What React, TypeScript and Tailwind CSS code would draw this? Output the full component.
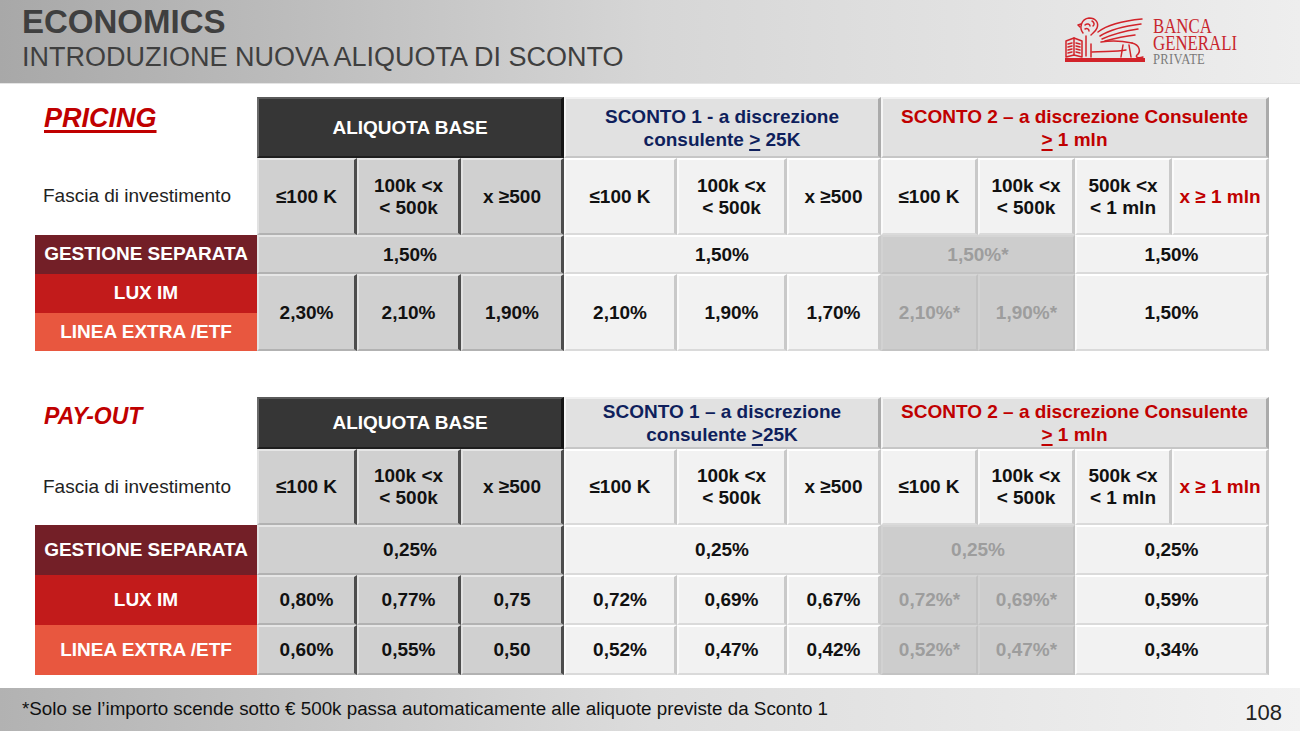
import React from 'react';

// bevelled cell styles (PowerPoint-like table)
const AB = 'bg-[#d0d0d0] border-t-2 border-t-[#e6e6e6] border-l-2 border-l-[#e2e2e2] border-b-2 border-b-[#b2b2b2] border-r-[3px] border-r-[#4d4d4d]';
const S1 = 'bg-[#f2f2f2] border-t-2 border-t-white border-l-2 border-l-[#fbfbfb] border-b-2 border-b-[#dadada] border-r-[3px] border-r-[#c9c9c9]';
const GR = 'bg-[#cdcdcd] text-[#9d9d9d] border-t-2 border-t-[#d5d5d5] border-l-2 border-l-[#d2d2d2] border-b-2 border-b-[#c3c3c3] border-r-2 border-r-[#c2c2c2]';
const HD = 'bg-[#363636] text-white border-t-2 border-t-[#5a5a5a] border-l-2 border-l-[#6a6a6a] border-b-2 border-b-[#1e1e1e] border-r-[3px] border-r-[#141414]';
const HL = 'bg-[#e1e1e1] border-t-2 border-t-[#f1f1f1] border-l-2 border-l-[#f5f5f5] border-b-2 border-b-[#c6c6c6] border-r-[3px] border-r-[#aaaaaa]';

interface CellProps {
  className?: string;
  children?: React.ReactNode;
}

const Cell: React.FC<CellProps> = ({ className = '', children }) => (
  <div className={`flex items-center justify-center text-center font-bold text-[19px] leading-[22px] ${className}`}>
    {children}
  </div>
);

const Label: React.FC<{ bg: string; children: React.ReactNode }> = ({ bg, children }) => (
  <div className={`flex items-center justify-center text-white font-bold text-[19px] ${bg}`}>{children}</div>
);

const Ge = ({ color }: { color: string }) => (
  <span className={`underline underline-offset-[3px] decoration-[2px] ${color}`}>&gt;</span>
);

const Fascia: React.FC = () => (
  <>
    <div className="flex items-center pl-[8px] text-[19px] text-[#222]">Fascia di investimento</div>
    <Cell className={AB}>≤100 K</Cell>
    <Cell className={AB}>100k &lt;x<br />&lt; 500k</Cell>
    <Cell className={AB}>x ≥500</Cell>
    <Cell className={S1}>≤100 K</Cell>
    <Cell className={S1}>100k &lt;x<br />&lt; 500k</Cell>
    <Cell className={S1}>x ≥500</Cell>
    <Cell className={S1}>≤100 K</Cell>
    <Cell className={S1}>100k &lt;x<br />&lt; 500k</Cell>
    <Cell className={S1}>500k &lt;x<br />&lt; 1 mln</Cell>
    <Cell className={`${S1} text-[#c00000]`}>x ≥ 1 mln</Cell>
  </>
);

const Lion: React.FC = () => (
  <svg width="80" height="46" viewBox="0 0 80 46" fill="none" stroke="#d2232a" strokeWidth="1.5" strokeLinecap="round" strokeLinejoin="round">
    <rect x="0" y="41" width="80" height="4" fill="#d2232a" stroke="none" />
    {/* book */}
    <path d="M1 24 L9 21 L17 24 L17 40 L9 38 L1 40 Z" />
    <path d="M9 21 L9 38" />
    <path d="M3 27 L7 26 M3 30 L7 29 M3 33 L7 32 M3 36 L7 35" />
    <path d="M11 26 L15 27 M11 29 L15 30 M11 32 L15 33 M11 35 L15 36" />
    {/* head and mane */}
    <path d="M18 16 C14 11 16 2 24 1 C31 1 34 6 32 11 C31 14 28 16 26 18" />
    <path d="M20 8 C22 6 25 7 25 9 M20 12 C22 11 24 12 24 14 M27 4 C29 5 30 8 28 9" />
    <path d="M16 7 L13 8 L15 10" />
    {/* wings */}
    <path d="M33 15 C42 8 56 4 77 2" />
    <path d="M35 19 C46 12 59 9 76 7" />
    <path d="M37 22 C48 17 60 14 73 12" />
    <path d="M40 24 C51 21 61 19 70 18" />
    {/* body */}
    <path d="M36 25 C47 23 58 24 67 26" />
    <path d="M27 35 C39 34 51 35 61 33" />
    <path d="M21 19 L21 39 M26 27 L26 40" />
    <path d="M58 28 L56 40 M64 28 L66 40" />
    <path d="M67 26 C75 28 76 35 72 38 C70 40 73 42 78 40" />
  </svg>
);

export default function App() {
  return (
    <div className="w-[1300px] h-[731px] bg-white overflow-hidden flex flex-col font-['Liberation_Sans',Arial,sans-serif] text-[#111]">
      {/* Header */}
      <div className="h-[84px] shrink-0 bg-linear-to-r from-[#a8a8a8] via-[#d6d6d6] to-[#eeeeee] border-b border-b-[#e4e4e4] flex justify-between">
        <div className="pl-[22px] pt-[3px] text-[#3f3f3f]">
          <div className="text-[33px] leading-[37px] font-bold">ECONOMICS</div>
          <div className="text-[27px] leading-[30px] mt-[2px]">INTRODUZIONE NUOVA ALIQUOTA DI SCONTO</div>
        </div>
        <div className="flex items-start mt-[17px] mr-[63px] gap-[8px]">
          <Lion />
          <div className="w-[84px] whitespace-nowrap font-['Liberation_Serif',serif] mt-[1px]">
            <div className="text-[#c8262d] text-[21px] leading-[17px] scale-x-[0.8] origin-left">BANCA<br />GENERALI</div>
            <div className="text-[#7a7a7a] text-[14px] leading-[13px] scale-x-[0.9] origin-left tracking-[0.3px] mt-[1px]">PRIVATE</div>
          </div>
        </div>
      </div>

      {/* PRICING table */}
      <div className="mt-[13px] ml-[35px] grid grid-cols-[222px_100px_104px_103px_113px_110px_94px_97px_97px_97px_97px] grid-rows-[61px_77px_39px_39px_38px]">
        <div className="pl-[9px] pt-[1px]">
          <span className="text-[27px] font-bold italic text-[#c00000] underline decoration-[3px] underline-offset-[3px]">PRICING</span>
        </div>
        <Cell className={`${HD} col-span-3`}>ALIQUOTA BASE</Cell>
        <Cell className={`${HL} col-span-3 text-[#0f1f5c] leading-[23px]`}>
          <span>SCONTO 1 - a discrezione<br />consulente <Ge color="text-[#0f1f5c]" /> 25K</span>
        </Cell>
        <Cell className={`${HL} col-span-4 text-[#c00000] leading-[23px]`}>
          <span>SCONTO 2 – a discrezione Consulente<br /><Ge color="text-[#c00000]" /> 1 mln</span>
        </Cell>

        <Fascia />

        <Label bg="bg-[#731f27]">GESTIONE SEPARATA</Label>
        <Cell className={`${AB} col-span-3`}>1,50%</Cell>
        <Cell className={`${S1} col-span-3`}>1,50%</Cell>
        <Cell className={`${GR} col-span-2`}>1,50%*</Cell>
        <Cell className={`${S1} col-span-2`}>1,50%</Cell>

        <Label bg="bg-[#c21b1b]">LUX IM</Label>
        <Cell className={`${AB} row-span-2`}>2,30%</Cell>
        <Cell className={`${AB} row-span-2`}>2,10%</Cell>
        <Cell className={`${AB} row-span-2`}>1,90%</Cell>
        <Cell className={`${S1} row-span-2`}>2,10%</Cell>
        <Cell className={`${S1} row-span-2`}>1,90%</Cell>
        <Cell className={`${S1} row-span-2`}>1,70%</Cell>
        <Cell className={`${GR} row-span-2`}>2,10%*</Cell>
        <Cell className={`${GR} row-span-2`}>1,90%*</Cell>
        <Cell className={`${S1} row-span-2 col-span-2`}>1,50%</Cell>
        <Label bg="bg-[#e8573f]">LINEA EXTRA /ETF</Label>
      </div>

      {/* PAY-OUT table */}
      <div className="mt-[46px] ml-[35px] grid grid-cols-[222px_100px_104px_103px_113px_110px_94px_97px_97px_97px_97px] grid-rows-[52px_76px_50px_50px_50px]">
        <div className="pl-[9px] pt-[2px]">
          <span className="text-[23px] font-bold italic text-[#c00000]">PAY-OUT</span>
        </div>
        <Cell className={`${HD} col-span-3`}>ALIQUOTA BASE</Cell>
        <Cell className={`${HL} col-span-3 text-[#0f1f5c] leading-[23px]`}>
          <span>SCONTO 1 – a discrezione<br />consulente <Ge color="text-[#0f1f5c]" />25K</span>
        </Cell>
        <Cell className={`${HL} col-span-4 text-[#c00000] leading-[23px]`}>
          <span>SCONTO 2 – a discrezione Consulente<br /><Ge color="text-[#c00000]" /> 1 mln</span>
        </Cell>

        <Fascia />

        <Label bg="bg-[#731f27]">GESTIONE SEPARATA</Label>
        <Cell className={`${AB} col-span-3`}>0,25%</Cell>
        <Cell className={`${S1} col-span-3`}>0,25%</Cell>
        <Cell className={`${GR} col-span-2`}>0,25%</Cell>
        <Cell className={`${S1} col-span-2`}>0,25%</Cell>

        <Label bg="bg-[#c21b1b]">LUX IM</Label>
        <Cell className={AB}>0,80%</Cell>
        <Cell className={AB}>0,77%</Cell>
        <Cell className={AB}>0,75</Cell>
        <Cell className={S1}>0,72%</Cell>
        <Cell className={S1}>0,69%</Cell>
        <Cell className={S1}>0,67%</Cell>
        <Cell className={GR}>0,72%*</Cell>
        <Cell className={GR}>0,69%*</Cell>
        <Cell className={`${S1} col-span-2`}>0,59%</Cell>

        <Label bg="bg-[#e8573f]">LINEA EXTRA /ETF</Label>
        <Cell className={AB}>0,60%</Cell>
        <Cell className={AB}>0,55%</Cell>
        <Cell className={AB}>0,50</Cell>
        <Cell className={S1}>0,52%</Cell>
        <Cell className={S1}>0,47%</Cell>
        <Cell className={S1}>0,42%</Cell>
        <Cell className={GR}>0,52%*</Cell>
        <Cell className={GR}>0,47%*</Cell>
        <Cell className={`${S1} col-span-2`}>0,34%</Cell>
      </div>

      {/* Footer */}
      <div className="mt-auto h-[43px] shrink-0 bg-linear-to-r from-[#b2b2b2] via-[#dcdcdc] to-[#f2f2f2] flex items-center justify-between pl-[22px] pr-[18px]">
        <span className="text-[18.8px] text-[#111]">*Solo se l’importo scende sotto € 500k passa automaticamente alle aliquote previste da Sconto 1</span>
        <span className="text-[22px] text-[#222] pt-[6px]">108</span>
      </div>
    </div>
  );
}
